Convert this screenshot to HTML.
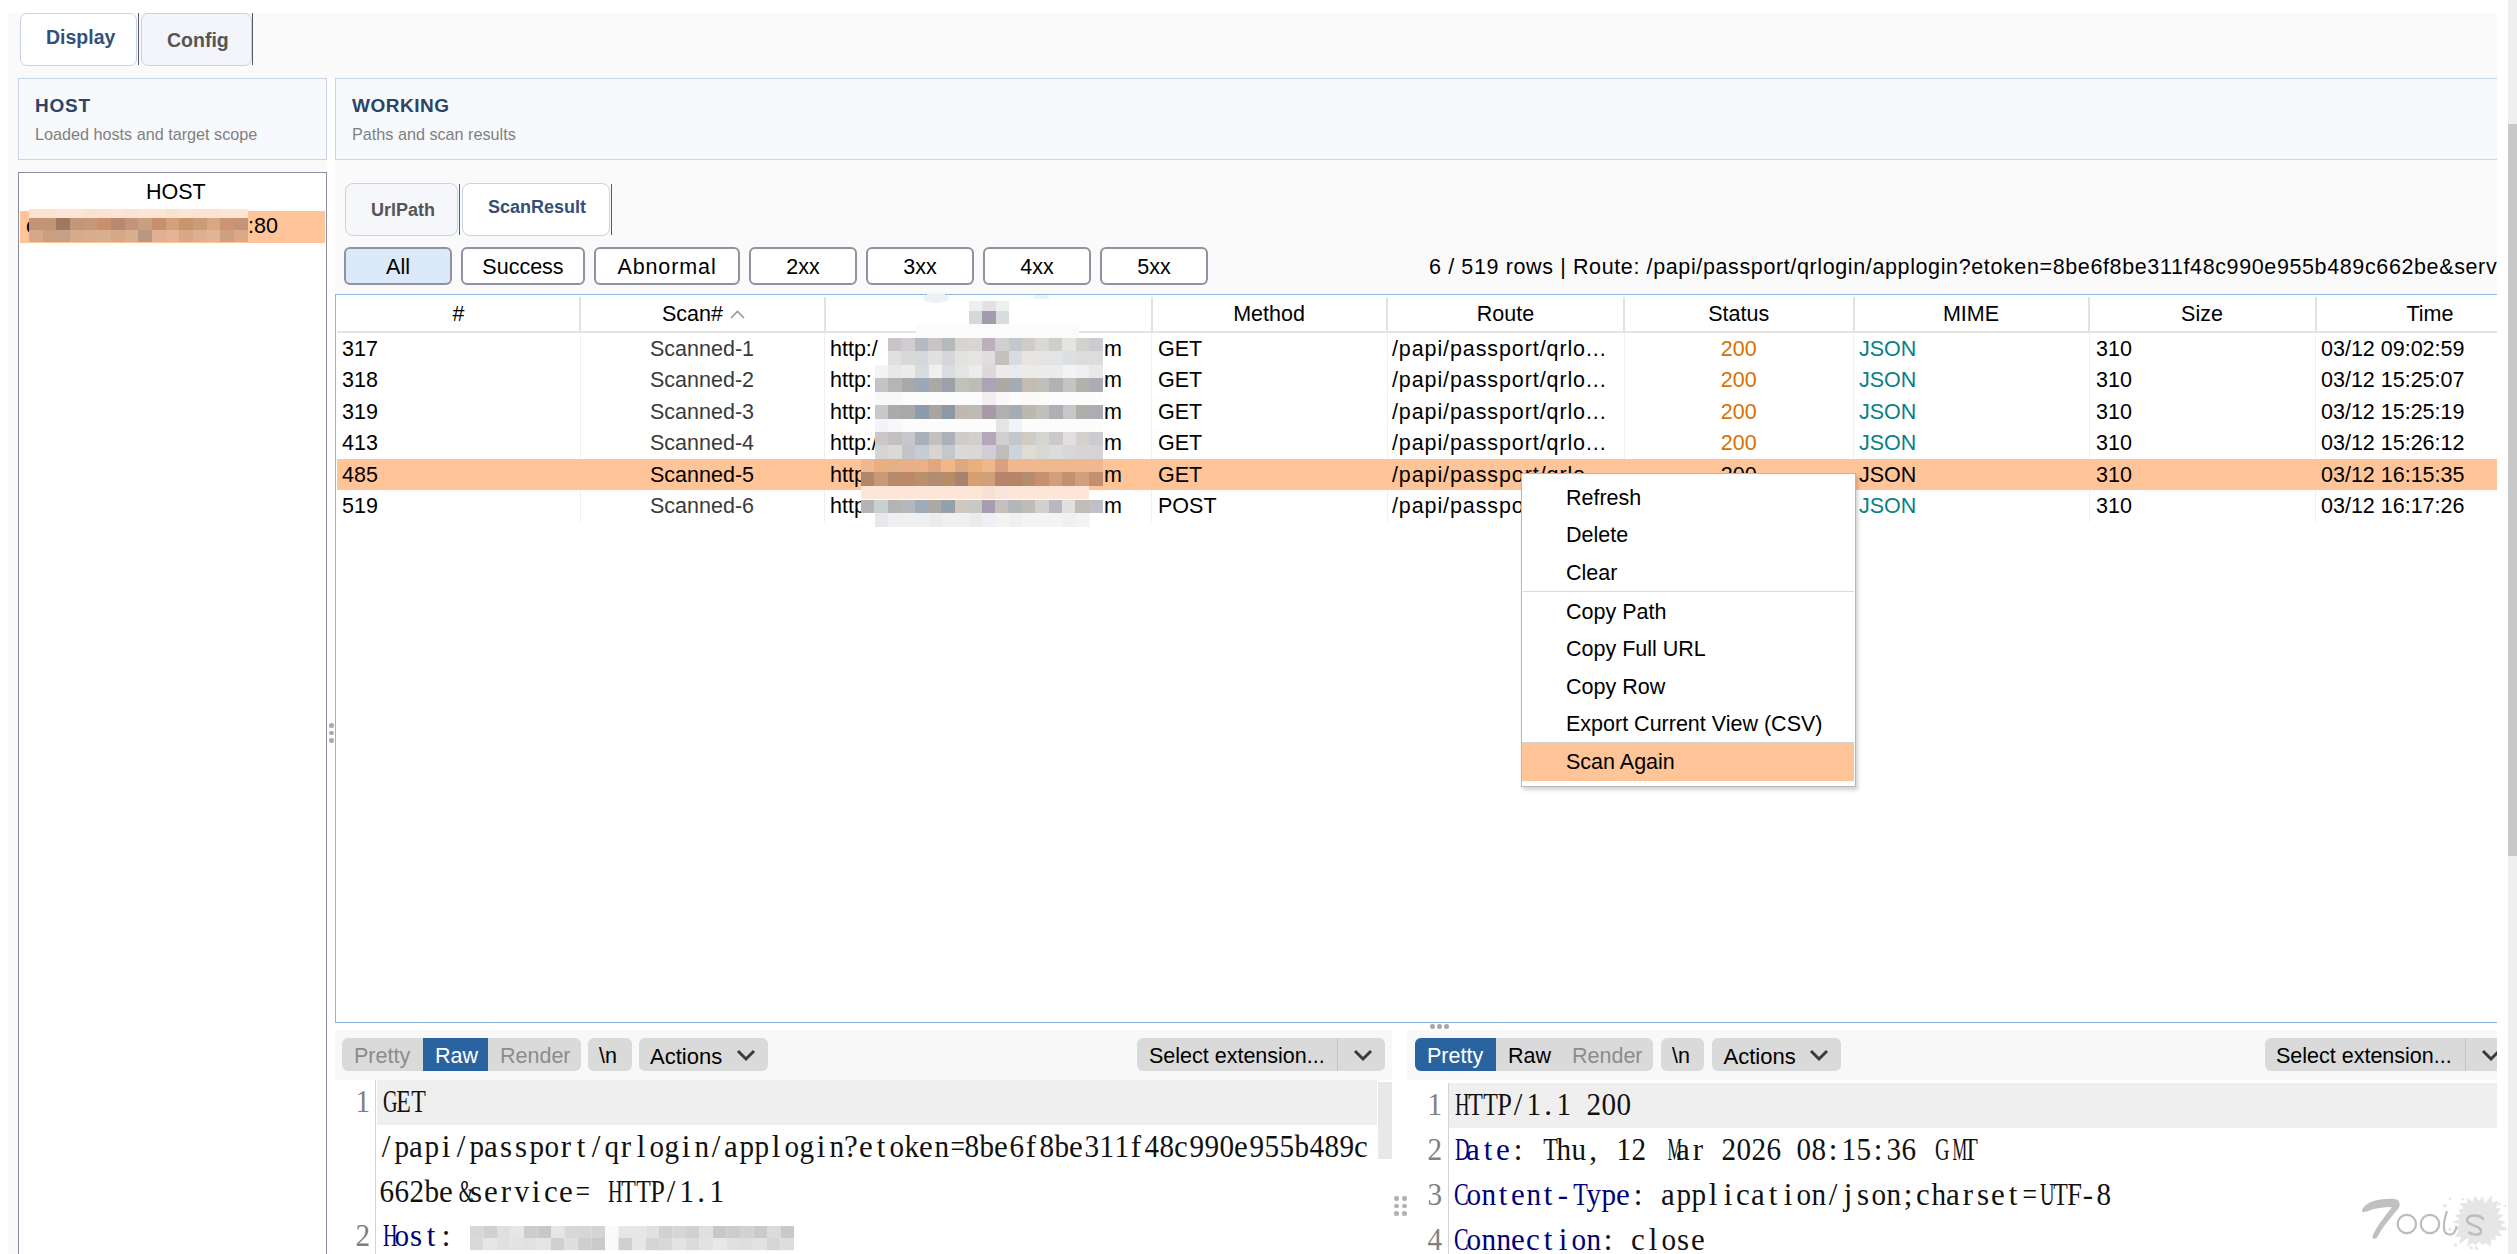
<!DOCTYPE html>
<html><head><meta charset="utf-8">
<style>
*{box-sizing:border-box;margin:0;padding:0}
html,body{width:2517px;height:1254px;overflow:hidden;background:#fff}
body{position:relative;font-family:"Liberation Sans",sans-serif;color:#000}
.a{position:absolute}
.t{position:absolute;white-space:pre;line-height:1}
.bg{background:#fafafa}
.tab{position:absolute;border:1px solid #c6d3e6;border-radius:8px}
.vl{position:absolute;width:1.4px;background:#585b6a}
.ph{position:absolute;background:#f7f9fc;border:1.5px solid #c9d6e9}
.ph .h{position:absolute;left:16px;top:16.5px;font-size:19px;font-weight:bold;letter-spacing:0.8px;color:#2c4466;line-height:1}
.ph .s{position:absolute;left:16px;top:47px;font-size:16.2px;color:#808080;line-height:1}
.fb{position:absolute;top:247px;height:38px;border:2px solid #9291a0;border-radius:6px;background:#fff;font-size:21.5px;text-align:center;line-height:36px}
.hd{font-size:21.5px}
.sep{position:absolute;width:2px;background:#e2e2e2}
.rsep{position:absolute;width:1px;background:#f0f0f0}
.ser{font-family:"Liberation Serif",serif;font-size:31px;color:#111}
.ser i{display:inline-block;width:15px;text-align:center;font-style:normal}
.ser b{display:inline-block;font-weight:normal}
.tb{position:absolute;background:#dadada;border-radius:6px;font-size:21.5px;line-height:33px;height:33px;top:1038px}
</style></head><body>

<!-- top tab strip -->
<div class="a bg" style="left:8px;top:13px;width:2489px;height:65px"></div>
<div class="tab" style="left:20px;top:13px;width:117px;height:53px;background:#fff;border-radius:7px"></div>
<div class="tab" style="left:141px;top:13px;width:111px;height:53px;background:#f3f5fa;border-radius:7px"></div>
<div class="vl" style="left:138px;top:13px;height:52px"></div>
<div class="vl" style="left:252px;top:13px;height:52px"></div>
<div class="t" style="left:46px;top:28px;font-size:19.5px;font-weight:bold;color:#34507a">Display</div>
<div class="t" style="left:167px;top:31px;font-size:19.5px;font-weight:bold;color:#555">Config</div>

<!-- left gray strip -->
<div class="a bg" style="left:8px;top:78px;width:319px;height:1176px"></div>
<!-- right gray work area -->
<div class="a bg" style="left:335px;top:78px;width:2162px;height:216px"></div>

<!-- panel headers -->
<div class="ph" style="left:18px;top:78px;width:309px;height:82px"><div class="h">HOST</div><div class="s">Loaded hosts and target scope</div></div>
<div class="ph" style="left:335px;top:78px;width:2162px;height:82px;border-right:none"><div class="h" style="letter-spacing:0.5px">WORKING</div><div class="s">Paths and scan results</div></div>

<!-- host table -->
<div class="a" style="left:18px;top:172px;width:309px;height:1090px;background:#fff;border:1.5px solid #8e8ca0;border-bottom:none"></div>
<div class="t hd" style="left:146px;top:182px;font-size:21.5px">HOST</div>
<div class="a" style="left:20px;top:211px;width:305px;height:32px;background:#ffc497"></div>
<div class="t hd" style="left:248px;top:216px">:80</div>
<div class="t hd" style="left:26px;top:216px">c</div>

<!-- splitter dots -->
<div class="a" style="left:329px;top:723px;width:4.5px;height:4.5px;border-radius:50%;background:#aaa"></div>
<div class="a" style="left:329px;top:730.5px;width:4.5px;height:4.5px;border-radius:50%;background:#aaa"></div>
<div class="a" style="left:329px;top:738px;width:4.5px;height:4.5px;border-radius:50%;background:#aaa"></div>

<!-- UrlPath / ScanResult tabs -->
<div class="tab" style="left:345px;top:183px;width:113px;height:53px;background:#f5f7fb;border-width:1.5px"></div>
<div class="tab" style="left:462px;top:183px;width:148px;height:53px;background:#fff;border-width:1.5px"></div>
<div class="vl" style="left:459px;top:184px;height:51px;width:1.4px"></div>
<div class="vl" style="left:611px;top:184px;height:51px;width:1.4px"></div>
<div class="t" style="left:371px;top:201px;font-size:18px;font-weight:bold;color:#555">UrlPath</div>
<div class="t" style="left:488px;top:198px;font-size:18px;font-weight:bold;color:#34507a">ScanResult</div>

<!-- filter buttons -->
<div class="fb" style="left:344px;width:108px;background:#dbe9f8">All</div>
<div class="fb" style="left:461px;width:124px">Success</div>
<div class="fb" style="left:594px;width:146px;letter-spacing:0.9px">Abnormal</div>
<div class="fb" style="left:749px;width:108px">2xx</div>
<div class="fb" style="left:866px;width:108px">3xx</div>
<div class="fb" style="left:983px;width:108px">4xx</div>
<div class="fb" style="left:1100px;width:108px">5xx</div>
<div class="a" style="left:1420px;top:250px;width:1077px;height:36px;overflow:hidden"><div class="t" style="left:9px;top:6.5px;font-size:21.5px;letter-spacing:0.62px">6 / 519 rows | Route: /papi/passport/qrlogin/applogin?etoken=8be6f8be311f48c990e955b489c662be&amp;service=</div></div>

<!-- TABLE -->
<div class="a" style="left:335px;top:294px;width:2162px;height:729px;background:#fff;border:1.5px solid #8db4e2;border-right:none"></div>
<div class="sep" style="left:579.3px;top:297px;height:35px"></div>
<div class="rsep" style="left:579.8px;top:333px;height:189px"></div>
<div class="sep" style="left:823.5px;top:297px;height:35px"></div>
<div class="rsep" style="left:824.0px;top:333px;height:189px"></div>
<div class="sep" style="left:1150.5px;top:297px;height:35px"></div>
<div class="rsep" style="left:1151.0px;top:333px;height:189px"></div>
<div class="sep" style="left:1386.0px;top:297px;height:35px"></div>
<div class="rsep" style="left:1386.5px;top:333px;height:189px"></div>
<div class="sep" style="left:1623.0px;top:297px;height:35px"></div>
<div class="rsep" style="left:1623.5px;top:333px;height:189px"></div>
<div class="sep" style="left:1852.5px;top:297px;height:35px"></div>
<div class="rsep" style="left:1853.0px;top:333px;height:189px"></div>
<div class="sep" style="left:2088.0px;top:297px;height:35px"></div>
<div class="rsep" style="left:2088.5px;top:333px;height:189px"></div>
<div class="sep" style="left:2314.5px;top:297px;height:35px"></div>
<div class="rsep" style="left:2315.0px;top:333px;height:189px"></div>
<div class="a" style="left:337px;top:331px;width:2160px;height:2px;background:#e4e4e4"></div>
<div class="t hd" style="left:258.5px;width:400px;text-align:center;top:304.3px">#</div>
<div class="t hd" style="left:1069px;width:400px;text-align:center;top:304.3px">Method</div>
<div class="t hd" style="left:1305.5px;width:400px;text-align:center;top:304.3px">Route</div>
<div class="t hd" style="left:1538.7px;width:400px;text-align:center;top:304.3px">Status</div>
<div class="t hd" style="left:1771px;width:400px;text-align:center;top:304.3px">MIME</div>
<div class="t hd" style="left:2002px;width:400px;text-align:center;top:304.3px">Size</div>
<div class="t hd" style="left:2230px;width:400px;text-align:center;top:304.3px">Time</div>
<div class="t hd" style="left:662px;top:304.3px">Scan#</div>
<svg class="a" style="left:729px;top:308px" width="17" height="12"><path d="M2 10 L8.5 3.5 L15 10" fill="none" stroke="#9a9a9a" stroke-width="1.6"/></svg>
<div class="a" style="left:337px;top:459px;width:2160px;height:31px;background:#ffc497"></div>
<div class="t hd" style="left:342px;top:338.5px">317</div>
<div class="t hd" style="left:502px;width:400px;text-align:center;top:338.5px;color:#3a3a3a">Scanned-1</div>
<div class="t hd" style="left:830px;top:338.5px">http:/</div>
<div class="t hd" style="left:1104px;top:338.5px">m</div>
<div class="t hd" style="left:1158px;top:338.5px">GET</div>
<div class="t hd" style="left:1392px;top:338.5px;letter-spacing:0.9px">/papi/passport/qrlo...</div>
<div class="t hd" style="left:1538.7px;width:400px;text-align:center;top:338.5px;color:#d97000">200</div>
<div class="t hd" style="left:1859px;top:338.5px;color:#0a7f86">JSON</div>
<div class="t hd" style="left:2096px;top:338.5px">310</div>
<div class="t hd" style="left:2321px;top:338.5px">03/12 09:02:59</div>
<div class="t hd" style="left:342px;top:370.0px">318</div>
<div class="t hd" style="left:502px;width:400px;text-align:center;top:370.0px;color:#3a3a3a">Scanned-2</div>
<div class="t hd" style="left:830px;top:370.0px">http:</div>
<div class="t hd" style="left:1104px;top:370.0px">m</div>
<div class="t hd" style="left:1158px;top:370.0px">GET</div>
<div class="t hd" style="left:1392px;top:370.0px;letter-spacing:0.9px">/papi/passport/qrlo...</div>
<div class="t hd" style="left:1538.7px;width:400px;text-align:center;top:370.0px;color:#d97000">200</div>
<div class="t hd" style="left:1859px;top:370.0px;color:#0a7f86">JSON</div>
<div class="t hd" style="left:2096px;top:370.0px">310</div>
<div class="t hd" style="left:2321px;top:370.0px">03/12 15:25:07</div>
<div class="t hd" style="left:342px;top:401.5px">319</div>
<div class="t hd" style="left:502px;width:400px;text-align:center;top:401.5px;color:#3a3a3a">Scanned-3</div>
<div class="t hd" style="left:830px;top:401.5px">http:</div>
<div class="t hd" style="left:1104px;top:401.5px">m</div>
<div class="t hd" style="left:1158px;top:401.5px">GET</div>
<div class="t hd" style="left:1392px;top:401.5px;letter-spacing:0.9px">/papi/passport/qrlo...</div>
<div class="t hd" style="left:1538.7px;width:400px;text-align:center;top:401.5px;color:#d97000">200</div>
<div class="t hd" style="left:1859px;top:401.5px;color:#0a7f86">JSON</div>
<div class="t hd" style="left:2096px;top:401.5px">310</div>
<div class="t hd" style="left:2321px;top:401.5px">03/12 15:25:19</div>
<div class="t hd" style="left:342px;top:433.0px">413</div>
<div class="t hd" style="left:502px;width:400px;text-align:center;top:433.0px;color:#3a3a3a">Scanned-4</div>
<div class="t hd" style="left:830px;top:433.0px">http:/</div>
<div class="t hd" style="left:1104px;top:433.0px">m</div>
<div class="t hd" style="left:1158px;top:433.0px">GET</div>
<div class="t hd" style="left:1392px;top:433.0px;letter-spacing:0.9px">/papi/passport/qrlo...</div>
<div class="t hd" style="left:1538.7px;width:400px;text-align:center;top:433.0px;color:#d97000">200</div>
<div class="t hd" style="left:1859px;top:433.0px;color:#0a7f86">JSON</div>
<div class="t hd" style="left:2096px;top:433.0px">310</div>
<div class="t hd" style="left:2321px;top:433.0px">03/12 15:26:12</div>
<div class="t hd" style="left:342px;top:464.5px">485</div>
<div class="t hd" style="left:502px;width:400px;text-align:center;top:464.5px;color:#000">Scanned-5</div>
<div class="t hd" style="left:830px;top:464.5px">http</div>
<div class="t hd" style="left:1104px;top:464.5px">m</div>
<div class="t hd" style="left:1158px;top:464.5px">GET</div>
<div class="t hd" style="left:1392px;top:464.5px;letter-spacing:0.9px">/papi/passport/qrlo...</div>
<div class="t hd" style="left:1538.7px;width:400px;text-align:center;top:464.5px;color:#000">200</div>
<div class="t hd" style="left:1859px;top:464.5px;color:#000">JSON</div>
<div class="t hd" style="left:2096px;top:464.5px">310</div>
<div class="t hd" style="left:2321px;top:464.5px">03/12 16:15:35</div>
<div class="t hd" style="left:342px;top:496.0px">519</div>
<div class="t hd" style="left:502px;width:400px;text-align:center;top:496.0px;color:#3a3a3a">Scanned-6</div>
<div class="t hd" style="left:830px;top:496.0px">http</div>
<div class="t hd" style="left:1104px;top:496.0px">m</div>
<div class="t hd" style="left:1158px;top:496.0px">POST</div>
<div class="t hd" style="left:1392px;top:496.0px;letter-spacing:0.9px">/papi/passport/qrlo...</div>
<div class="t hd" style="left:1538.7px;width:400px;text-align:center;top:496.0px;color:#d97000">200</div>
<div class="t hd" style="left:1859px;top:496.0px;color:#0a7f86">JSON</div>
<div class="t hd" style="left:2096px;top:496.0px">310</div>
<div class="t hd" style="left:2321px;top:496.0px">03/12 16:17:26</div>
<svg class="a" style="left:855px;top:288px" width="260" height="250" shape-rendering="crispEdges"><rect x="60.5" y="35.5" width="163" height="15" fill="#fbfbfb"/><ellipse cx="81" cy="10" rx="13" ry="5" fill="#eef1f6"/><ellipse cx="186" cy="9" rx="8" ry="2.5" fill="#eef1f6"/><rect x="114.0" y="12.5" width="13.6" height="12.6" fill="#ecf0f0"/><rect x="127.4" y="12.5" width="13.6" height="12.6" fill="#e4e0e4"/><rect x="140.8" y="12.5" width="13.6" height="12.6" fill="#ecf0ee"/><rect x="114.0" y="23.0" width="13.6" height="12.6" fill="#d4d8d8"/><rect x="127.4" y="23.0" width="13.6" height="12.6" fill="#a09cac"/><rect x="140.8" y="23.0" width="13.6" height="12.6" fill="#d8dcdc"/><rect x="33.0" y="49.9" width="13.8" height="13.8" fill="#c8c4c8"/><rect x="46.4" y="49.9" width="13.8" height="13.8" fill="#cfcdd0"/><rect x="59.8" y="49.9" width="13.8" height="13.8" fill="#b4bac4"/><rect x="73.2" y="49.9" width="13.8" height="13.8" fill="#c8c4c4"/><rect x="86.6" y="49.9" width="13.8" height="13.8" fill="#b4b9bc"/><rect x="100.0" y="49.9" width="13.8" height="13.8" fill="#d8d4d0"/><rect x="113.4" y="49.9" width="13.8" height="13.8" fill="#d8d6d4"/><rect x="126.8" y="49.9" width="13.8" height="13.8" fill="#bcb0bc"/><rect x="140.2" y="49.9" width="13.8" height="13.8" fill="#d0d0d0"/><rect x="153.6" y="49.9" width="13.8" height="13.8" fill="#c4c8cc"/><rect x="167.0" y="49.9" width="13.8" height="13.8" fill="#d0ccc8"/><rect x="180.4" y="49.9" width="13.8" height="13.8" fill="#d8d8d6"/><rect x="193.8" y="49.9" width="13.8" height="13.8" fill="#d0cecc"/><rect x="207.2" y="49.9" width="13.8" height="13.8" fill="#e4e4e2"/><rect x="220.6" y="49.9" width="13.8" height="13.8" fill="#d4d2d0"/><rect x="234.0" y="49.9" width="13.8" height="13.8" fill="#cccbd0"/><rect x="33.0" y="63.3" width="13.8" height="13.8" fill="#e0e0e0"/><rect x="46.4" y="63.3" width="13.8" height="13.8" fill="#d8d8d8"/><rect x="59.8" y="63.3" width="13.8" height="13.8" fill="#d4d8dc"/><rect x="73.2" y="63.3" width="13.8" height="13.8" fill="#e0e0de"/><rect x="86.6" y="63.3" width="13.8" height="13.8" fill="#d4d6da"/><rect x="100.0" y="63.3" width="13.8" height="13.8" fill="#e4e2e0"/><rect x="113.4" y="63.3" width="13.8" height="13.8" fill="#e4e4e2"/><rect x="126.8" y="63.3" width="13.8" height="13.8" fill="#e0dce0"/><rect x="140.2" y="63.3" width="13.8" height="13.8" fill="#c4c0bc"/><rect x="153.6" y="63.3" width="13.8" height="13.8" fill="#d8dce0"/><rect x="167.0" y="63.3" width="13.8" height="13.8" fill="#e8e4e0"/><rect x="180.4" y="63.3" width="13.8" height="13.8" fill="#e4e4e2"/><rect x="193.8" y="63.3" width="13.8" height="13.8" fill="#e4e4e4"/><rect x="207.2" y="63.3" width="13.8" height="13.8" fill="#dce0e2"/><rect x="220.6" y="63.3" width="13.8" height="13.8" fill="#dcdcdc"/><rect x="234.0" y="63.3" width="13.8" height="13.8" fill="#dcdcde"/><rect x="20.0" y="76.7" width="13.8" height="13.8" fill="#f4f4f4"/><rect x="33.4" y="76.7" width="13.8" height="13.8" fill="#e8e8e8"/><rect x="46.8" y="76.7" width="13.8" height="13.8" fill="#ececea"/><rect x="60.2" y="76.7" width="13.8" height="13.8" fill="#d8dcdf"/><rect x="73.6" y="76.7" width="13.8" height="13.8" fill="#f0f0f0"/><rect x="87.0" y="76.7" width="13.8" height="13.8" fill="#dadcdf"/><rect x="100.4" y="76.7" width="13.8" height="13.8" fill="#e4e4e4"/><rect x="113.8" y="76.7" width="13.8" height="13.8" fill="#ececec"/><rect x="127.2" y="76.7" width="13.8" height="13.8" fill="#dcd8dc"/><rect x="140.6" y="76.7" width="13.8" height="13.8" fill="#ececee"/><rect x="154.0" y="76.7" width="13.8" height="13.8" fill="#e8ecee"/><rect x="167.4" y="76.7" width="13.8" height="13.8" fill="#eeeae8"/><rect x="180.8" y="76.7" width="13.8" height="13.8" fill="#ececec"/><rect x="194.2" y="76.7" width="13.8" height="13.8" fill="#ececec"/><rect x="207.6" y="76.7" width="13.8" height="13.8" fill="#f4f4f4"/><rect x="221.0" y="76.7" width="13.8" height="13.8" fill="#f0f0f0"/><rect x="234.4" y="76.7" width="13.8" height="13.8" fill="#e8e8e8"/><rect x="20.0" y="90.1" width="13.8" height="13.8" fill="#c4c4c8"/><rect x="33.4" y="90.1" width="13.8" height="13.8" fill="#b8b4b4"/><rect x="46.8" y="90.1" width="13.8" height="13.8" fill="#a8a8ac"/><rect x="60.2" y="90.1" width="13.8" height="13.8" fill="#9ca8b8"/><rect x="73.6" y="90.1" width="13.8" height="13.8" fill="#aca8a4"/><rect x="87.0" y="90.1" width="13.8" height="13.8" fill="#9ca0a8"/><rect x="100.4" y="90.1" width="13.8" height="13.8" fill="#c4c0bc"/><rect x="113.8" y="90.1" width="13.8" height="13.8" fill="#bcbcb8"/><rect x="127.2" y="90.1" width="13.8" height="13.8" fill="#aca4b4"/><rect x="140.6" y="90.1" width="13.8" height="13.8" fill="#aca8a4"/><rect x="154.0" y="90.1" width="13.8" height="13.8" fill="#a4acb4"/><rect x="167.4" y="90.1" width="13.8" height="13.8" fill="#c4bcb4"/><rect x="180.8" y="90.1" width="13.8" height="13.8" fill="#c0c0b8"/><rect x="194.2" y="90.1" width="13.8" height="13.8" fill="#b4b0b4"/><rect x="207.6" y="90.1" width="13.8" height="13.8" fill="#c4c4c4"/><rect x="221.0" y="90.1" width="13.8" height="13.8" fill="#b4b0ac"/><rect x="234.4" y="90.1" width="13.8" height="13.8" fill="#acacb4"/><rect x="20.0" y="103.5" width="13.8" height="13.8" fill="#f8f8fa"/><rect x="33.4" y="103.5" width="13.8" height="13.8" fill="#f6f8fa"/><rect x="46.8" y="103.5" width="13.8" height="13.8" fill="#fcfcfc"/><rect x="60.2" y="103.5" width="13.8" height="13.8" fill="#fcfcfc"/><rect x="73.6" y="103.5" width="13.8" height="13.8" fill="#fcfcfc"/><rect x="87.0" y="103.5" width="13.8" height="13.8" fill="#fcfcfc"/><rect x="100.4" y="103.5" width="13.8" height="13.8" fill="#fcfcfc"/><rect x="113.8" y="103.5" width="13.8" height="13.8" fill="#fcfcfc"/><rect x="127.2" y="103.5" width="13.8" height="13.8" fill="#f0eef0"/><rect x="140.6" y="103.5" width="13.8" height="13.8" fill="#f8f8f8"/><rect x="154.0" y="103.5" width="13.8" height="13.8" fill="#fcfcfc"/><rect x="167.4" y="103.5" width="13.8" height="13.8" fill="#fbfaf8"/><rect x="180.8" y="103.5" width="13.8" height="13.8" fill="#fafcfa"/><rect x="194.2" y="103.5" width="13.8" height="13.8" fill="#fcfcfc"/><rect x="207.6" y="103.5" width="13.8" height="13.8" fill="#fcfcfc"/><rect x="221.0" y="103.5" width="13.8" height="13.8" fill="#fcfcfc"/><rect x="234.4" y="103.5" width="13.8" height="13.8" fill="#fcfcfc"/><rect x="20.0" y="116.9" width="13.8" height="13.8" fill="#c8c8cc"/><rect x="33.4" y="116.9" width="13.8" height="13.8" fill="#acaaa8"/><rect x="46.8" y="116.9" width="13.8" height="13.8" fill="#a8a8a8"/><rect x="60.2" y="116.9" width="13.8" height="13.8" fill="#8c9cac"/><rect x="73.6" y="116.9" width="13.8" height="13.8" fill="#a8a4a0"/><rect x="87.0" y="116.9" width="13.8" height="13.8" fill="#8c98a4"/><rect x="100.4" y="116.9" width="13.8" height="13.8" fill="#c0b8b0"/><rect x="113.8" y="116.9" width="13.8" height="13.8" fill="#bcbab4"/><rect x="127.2" y="116.9" width="13.8" height="13.8" fill="#a898a8"/><rect x="140.6" y="116.9" width="13.8" height="13.8" fill="#b0b0b0"/><rect x="154.0" y="116.9" width="13.8" height="13.8" fill="#a4acb4"/><rect x="167.4" y="116.9" width="13.8" height="13.8" fill="#bcb8b0"/><rect x="180.8" y="116.9" width="13.8" height="13.8" fill="#c0c0bc"/><rect x="194.2" y="116.9" width="13.8" height="13.8" fill="#b0b0b4"/><rect x="207.6" y="116.9" width="13.8" height="13.8" fill="#c4c8c8"/><rect x="221.0" y="116.9" width="13.8" height="13.8" fill="#b0aca8"/><rect x="234.4" y="116.9" width="13.8" height="13.8" fill="#acacb4"/><rect x="20.0" y="130.6" width="13.8" height="13.8" fill="#f4f4f6"/><rect x="33.4" y="130.6" width="13.8" height="13.8" fill="#f8f8fa"/><rect x="46.8" y="130.6" width="13.8" height="13.8" fill="#fcfcfc"/><rect x="60.2" y="130.6" width="13.8" height="13.8" fill="#fcfcfc"/><rect x="73.6" y="130.6" width="13.8" height="13.8" fill="#fcfcfc"/><rect x="87.0" y="130.6" width="13.8" height="13.8" fill="#fcfcfc"/><rect x="100.4" y="130.6" width="13.8" height="13.8" fill="#fcfcfc"/><rect x="113.8" y="130.6" width="13.8" height="13.8" fill="#fcfcfc"/><rect x="127.2" y="130.6" width="13.8" height="13.8" fill="#fcfcfc"/><rect x="140.6" y="130.6" width="13.8" height="13.8" fill="#e4e4e2"/><rect x="154.0" y="130.6" width="13.8" height="13.8" fill="#f0f4f8"/><rect x="167.4" y="130.6" width="13.8" height="13.8" fill="#fcfcfc"/><rect x="180.8" y="130.6" width="13.8" height="13.8" fill="#fcfcfc"/><rect x="194.2" y="130.6" width="13.8" height="13.8" fill="#fcfcfc"/><rect x="207.6" y="130.6" width="13.8" height="13.8" fill="#fcfcfc"/><rect x="221.0" y="130.6" width="13.8" height="13.8" fill="#fcfcfc"/><rect x="234.4" y="130.6" width="13.8" height="13.8" fill="#fcfcfc"/><rect x="20.0" y="144.0" width="13.8" height="13.8" fill="#c8c8c8"/><rect x="33.4" y="144.0" width="13.8" height="13.8" fill="#c4c0c0"/><rect x="46.8" y="144.0" width="13.8" height="13.8" fill="#c8c8cc"/><rect x="60.2" y="144.0" width="13.8" height="13.8" fill="#a8b0bc"/><rect x="73.6" y="144.0" width="13.8" height="13.8" fill="#c4c0bc"/><rect x="87.0" y="144.0" width="13.8" height="13.8" fill="#acb0b8"/><rect x="100.4" y="144.0" width="13.8" height="13.8" fill="#d0ccc8"/><rect x="113.8" y="144.0" width="13.8" height="13.8" fill="#d0d0cc"/><rect x="127.2" y="144.0" width="13.8" height="13.8" fill="#b4a8b8"/><rect x="140.6" y="144.0" width="13.8" height="13.8" fill="#d0d0d0"/><rect x="154.0" y="144.0" width="13.8" height="13.8" fill="#c4c8cc"/><rect x="167.4" y="144.0" width="13.8" height="13.8" fill="#d0ccc4"/><rect x="180.8" y="144.0" width="13.8" height="13.8" fill="#d4d4d0"/><rect x="194.2" y="144.0" width="13.8" height="13.8" fill="#ccc8cc"/><rect x="207.6" y="144.0" width="13.8" height="13.8" fill="#e0e0e0"/><rect x="221.0" y="144.0" width="13.8" height="13.8" fill="#d4d0cc"/><rect x="234.4" y="144.0" width="13.8" height="13.8" fill="#ccccd0"/><rect x="20.0" y="157.4" width="13.8" height="13.8" fill="#d4d4d4"/><rect x="33.4" y="157.4" width="13.8" height="13.8" fill="#dcdad8"/><rect x="46.8" y="157.4" width="13.8" height="13.8" fill="#c4c4c8"/><rect x="60.2" y="157.4" width="13.8" height="13.8" fill="#c4ccd4"/><rect x="73.6" y="157.4" width="13.8" height="13.8" fill="#d8d4d0"/><rect x="87.0" y="157.4" width="13.8" height="13.8" fill="#c4c8cc"/><rect x="100.4" y="157.4" width="13.8" height="13.8" fill="#dcdad8"/><rect x="113.8" y="157.4" width="13.8" height="13.8" fill="#d8d8d4"/><rect x="127.2" y="157.4" width="13.8" height="13.8" fill="#d0ccd8"/><rect x="140.6" y="157.4" width="13.8" height="13.8" fill="#c0bcb8"/><rect x="154.0" y="157.4" width="13.8" height="13.8" fill="#ccd4dc"/><rect x="167.4" y="157.4" width="13.8" height="13.8" fill="#e0dcd4"/><rect x="180.8" y="157.4" width="13.8" height="13.8" fill="#d8d8d4"/><rect x="194.2" y="157.4" width="13.8" height="13.8" fill="#dcdcdc"/><rect x="207.6" y="157.4" width="13.8" height="13.8" fill="#d8d8dc"/><rect x="221.0" y="157.4" width="13.8" height="13.8" fill="#d8d4d4"/><rect x="234.4" y="157.4" width="13.8" height="13.8" fill="#d4d4d4"/><rect x="6.0" y="170.8" width="13.8" height="13.8" fill="#f0b890"/><rect x="19.4" y="170.8" width="13.8" height="13.8" fill="#e8b080"/><rect x="32.8" y="170.8" width="13.8" height="13.8" fill="#e4b088"/><rect x="46.2" y="170.8" width="13.8" height="13.8" fill="#e8b088"/><rect x="59.6" y="170.8" width="13.8" height="13.8" fill="#ecb088"/><rect x="73.0" y="170.8" width="13.8" height="13.8" fill="#e0a880"/><rect x="86.4" y="170.8" width="13.8" height="13.8" fill="#f0b888"/><rect x="99.8" y="170.8" width="13.8" height="13.8" fill="#e0a880"/><rect x="113.2" y="170.8" width="13.8" height="13.8" fill="#e8b080"/><rect x="126.6" y="170.8" width="13.8" height="13.8" fill="#f0b888"/><rect x="140.0" y="170.8" width="13.8" height="13.8" fill="#dca080"/><rect x="153.4" y="170.8" width="13.8" height="13.8" fill="#f0b88c"/><rect x="166.8" y="170.8" width="13.8" height="13.8" fill="#f0b890"/><rect x="180.2" y="170.8" width="13.8" height="13.8" fill="#f0b890"/><rect x="193.6" y="170.8" width="13.8" height="13.8" fill="#f0b890"/><rect x="207.0" y="170.8" width="13.8" height="13.8" fill="#f0b890"/><rect x="220.4" y="170.8" width="13.8" height="13.8" fill="#f0b890"/><rect x="233.8" y="170.8" width="13.8" height="13.8" fill="#f0b890"/><rect x="6.0" y="184.2" width="13.8" height="13.8" fill="#b08868"/><rect x="19.4" y="184.2" width="13.8" height="13.8" fill="#c89878"/><rect x="32.8" y="184.2" width="13.8" height="13.8" fill="#b88a6c"/><rect x="46.2" y="184.2" width="13.8" height="13.8" fill="#bc8868"/><rect x="59.6" y="184.2" width="13.8" height="13.8" fill="#b8906c"/><rect x="73.0" y="184.2" width="13.8" height="13.8" fill="#b08c70"/><rect x="86.4" y="184.2" width="13.8" height="13.8" fill="#b88c68"/><rect x="99.8" y="184.2" width="13.8" height="13.8" fill="#a88470"/><rect x="113.2" y="184.2" width="13.8" height="13.8" fill="#d8a070"/><rect x="126.6" y="184.2" width="13.8" height="13.8" fill="#d0a078"/><rect x="140.0" y="184.2" width="13.8" height="13.8" fill="#b8846c"/><rect x="153.4" y="184.2" width="13.8" height="13.8" fill="#b88468"/><rect x="166.8" y="184.2" width="13.8" height="13.8" fill="#b48c70"/><rect x="180.2" y="184.2" width="13.8" height="13.8" fill="#c8906c"/><rect x="193.6" y="184.2" width="13.8" height="13.8" fill="#d0a07c"/><rect x="207.0" y="184.2" width="13.8" height="13.8" fill="#c49070"/><rect x="220.4" y="184.2" width="13.8" height="13.8" fill="#d0a07c"/><rect x="233.8" y="184.2" width="13.8" height="13.8" fill="#c09070"/><rect x="6.0" y="197.6" width="13.8" height="13.8" fill="#fde6d8"/><rect x="19.4" y="197.6" width="13.8" height="13.8" fill="#fde6d8"/><rect x="32.8" y="197.6" width="13.8" height="13.8" fill="#fde6d8"/><rect x="46.2" y="197.6" width="13.8" height="13.8" fill="#fde6d8"/><rect x="59.6" y="197.6" width="13.8" height="13.8" fill="#fde6d8"/><rect x="73.0" y="197.6" width="13.8" height="13.8" fill="#fde6d8"/><rect x="86.4" y="197.6" width="13.8" height="13.8" fill="#fde6d8"/><rect x="99.8" y="197.6" width="13.8" height="13.8" fill="#fde6d8"/><rect x="113.2" y="197.6" width="13.8" height="13.8" fill="#fde6d8"/><rect x="126.6" y="197.6" width="13.8" height="13.8" fill="#f8e0d4"/><rect x="140.0" y="197.6" width="13.8" height="13.8" fill="#f8e6dc"/><rect x="153.4" y="197.6" width="13.8" height="13.8" fill="#fde6d8"/><rect x="166.8" y="197.6" width="13.8" height="13.8" fill="#fde6d8"/><rect x="180.2" y="197.6" width="13.8" height="13.8" fill="#fde6d8"/><rect x="193.6" y="197.6" width="13.8" height="13.8" fill="#fde6d8"/><rect x="207.0" y="197.6" width="13.8" height="13.8" fill="#fde6d8"/><rect x="220.4" y="197.6" width="13.8" height="13.8" fill="#fde6d8"/><rect x="6.0" y="211.6" width="13.8" height="13.8" fill="#b4b4b4"/><rect x="19.4" y="211.6" width="13.8" height="13.8" fill="#c8d0d0"/><rect x="32.8" y="211.6" width="13.8" height="13.8" fill="#b4b4b4"/><rect x="46.2" y="211.6" width="13.8" height="13.8" fill="#b4b8bc"/><rect x="59.6" y="211.6" width="13.8" height="13.8" fill="#9cacb8"/><rect x="73.0" y="211.6" width="13.8" height="13.8" fill="#aca8a4"/><rect x="86.4" y="211.6" width="13.8" height="13.8" fill="#94a0ac"/><rect x="99.8" y="211.6" width="13.8" height="13.8" fill="#d0c8c0"/><rect x="113.2" y="211.6" width="13.8" height="13.8" fill="#c8c8c4"/><rect x="126.6" y="211.6" width="13.8" height="13.8" fill="#a89cb0"/><rect x="140.0" y="211.6" width="13.8" height="13.8" fill="#c4c0bc"/><rect x="153.4" y="211.6" width="13.8" height="13.8" fill="#b0b8bc"/><rect x="166.8" y="211.6" width="13.8" height="13.8" fill="#c0bcb4"/><rect x="180.2" y="211.6" width="13.8" height="13.8" fill="#d0d0cc"/><rect x="193.6" y="211.6" width="13.8" height="13.8" fill="#b8b8c0"/><rect x="207.0" y="211.6" width="13.8" height="13.8" fill="#e0e0e0"/><rect x="220.4" y="211.6" width="13.8" height="13.8" fill="#c0bcb8"/><rect x="233.8" y="211.6" width="13.8" height="13.8" fill="#c0c0c8"/><rect x="20.0" y="225.0" width="13.8" height="13.8" fill="#e8e8ec"/><rect x="33.4" y="225.0" width="13.8" height="13.8" fill="#f0f0f0"/><rect x="46.8" y="225.0" width="13.8" height="13.8" fill="#f0f0f0"/><rect x="60.2" y="225.0" width="13.8" height="13.8" fill="#f0f0f0"/><rect x="73.6" y="225.0" width="13.8" height="13.8" fill="#ececec"/><rect x="87.0" y="225.0" width="13.8" height="13.8" fill="#f0f0f0"/><rect x="100.4" y="225.0" width="13.8" height="13.8" fill="#f0f0f0"/><rect x="113.8" y="225.0" width="13.8" height="13.8" fill="#ececec"/><rect x="127.2" y="225.0" width="13.8" height="13.8" fill="#f0f0f4"/><rect x="140.6" y="225.0" width="13.8" height="13.8" fill="#f4f4f4"/><rect x="154.0" y="225.0" width="13.8" height="13.8" fill="#f0f0f0"/><rect x="167.4" y="225.0" width="13.8" height="13.8" fill="#f4f4f4"/><rect x="180.8" y="225.0" width="13.8" height="13.8" fill="#f4f4f4"/><rect x="194.2" y="225.0" width="13.8" height="13.8" fill="#f4f4f4"/><rect x="207.6" y="225.0" width="13.8" height="13.8" fill="#f0f0f0"/><rect x="221.0" y="225.0" width="13.8" height="13.8" fill="#f4f4f4"/></svg>
<svg class="a" style="left:29px;top:209px" width="220" height="34" shape-rendering="crispEdges"><rect x="0.0" y="0" width="14" height="9" fill="#fde2d0"/><rect x="13.7" y="0" width="14" height="9" fill="#fde2d0"/><rect x="27.3" y="0" width="14" height="9" fill="#fde4d4"/><rect x="41.0" y="0" width="14" height="9" fill="#fde4d4"/><rect x="54.6" y="0" width="14" height="9" fill="#fce0d0"/><rect x="68.2" y="0" width="14" height="9" fill="#fce2d2"/><rect x="81.9" y="0" width="14" height="9" fill="#fde4d4"/><rect x="95.5" y="0" width="14" height="9" fill="#fce2d2"/><rect x="109.2" y="0" width="14" height="9" fill="#fde4d4"/><rect x="122.9" y="0" width="14" height="9" fill="#fde4d4"/><rect x="136.5" y="0" width="14" height="9" fill="#fce0d0"/><rect x="150.2" y="0" width="14" height="9" fill="#fde4d4"/><rect x="163.8" y="0" width="14" height="9" fill="#fde2d2"/><rect x="177.5" y="0" width="14" height="9" fill="#fde2d2"/><rect x="191.1" y="0" width="14" height="9" fill="#fde4d4"/><rect x="204.8" y="0" width="14" height="9" fill="#fde4d4"/><rect x="0.0" y="9" width="14" height="12" fill="#c49274"/><rect x="13.7" y="9" width="14" height="12" fill="#c29478"/><rect x="27.3" y="9" width="14" height="12" fill="#a07860"/><rect x="41.0" y="9" width="14" height="12" fill="#c09878"/><rect x="54.6" y="9" width="14" height="12" fill="#c49878"/><rect x="68.2" y="9" width="14" height="12" fill="#c8906c"/><rect x="81.9" y="9" width="14" height="12" fill="#b88870"/><rect x="95.5" y="9" width="14" height="12" fill="#c49478"/><rect x="109.2" y="9" width="14" height="12" fill="#c8a080"/><rect x="122.9" y="9" width="14" height="12" fill="#c49070"/><rect x="136.5" y="9" width="14" height="12" fill="#d4a078"/><rect x="150.2" y="9" width="14" height="12" fill="#c8946c"/><rect x="163.8" y="9" width="14" height="12" fill="#cc9c78"/><rect x="177.5" y="9" width="14" height="12" fill="#d8a880"/><rect x="191.1" y="9" width="14" height="12" fill="#cc9474"/><rect x="204.8" y="9" width="14" height="12" fill="#c49478"/><rect x="0.0" y="21" width="14" height="12" fill="#d4a888"/><rect x="13.7" y="21" width="14" height="12" fill="#c8a080"/><rect x="27.3" y="21" width="14" height="12" fill="#c4a084"/><rect x="41.0" y="21" width="14" height="12" fill="#d4ac8c"/><rect x="54.6" y="21" width="14" height="12" fill="#d8ac8c"/><rect x="68.2" y="21" width="14" height="12" fill="#d8b090"/><rect x="81.9" y="21" width="14" height="12" fill="#d4a888"/><rect x="95.5" y="21" width="14" height="12" fill="#d8b090"/><rect x="109.2" y="21" width="14" height="12" fill="#b89880"/><rect x="122.9" y="21" width="14" height="12" fill="#e0b090"/><rect x="136.5" y="21" width="14" height="12" fill="#e4b494"/><rect x="150.2" y="21" width="14" height="12" fill="#d8a888"/><rect x="163.8" y="21" width="14" height="12" fill="#dcb090"/><rect x="177.5" y="21" width="14" height="12" fill="#e0b494"/><rect x="191.1" y="21" width="14" height="12" fill="#cca080"/><rect x="204.8" y="21" width="14" height="12" fill="#dca888"/></svg>
<div class="a" style="left:1520.5px;top:473px;width:335px;height:314px;background:#fff;border:1.5px solid #b8b8b8;box-shadow:2px 3px 4px rgba(0,0,0,0.18)"></div>
<div class="a" style="left:1523px;top:590.5px;width:331px;height:1.5px;background:#dadada"></div>
<div class="a" style="left:1522px;top:743px;width:332px;height:38px;background:#ffc497"></div>
<div class="a" style="left:1522px;top:742px;width:332px;height:1.6px;background:#d2d2d2"></div>
<div class="t hd" style="left:1566px;top:488.0px">Refresh</div>
<div class="t hd" style="left:1566px;top:524.6px">Delete</div>
<div class="t hd" style="left:1566px;top:562.8px">Clear</div>
<div class="t hd" style="left:1566px;top:601.9px">Copy Path</div>
<div class="t hd" style="left:1566px;top:639.0px">Copy Full URL</div>
<div class="t hd" style="left:1566px;top:677.2px">Copy Row</div>
<div class="t hd" style="left:1566px;top:713.5px">Export Current View (CSV)</div>
<div class="t hd" style="left:1566px;top:752.0px">Scan Again</div><!-- /TABLE --><!-- EDITOR -->
<div class="a" style="left:335px;top:1030px;width:1057px;height:50px;background:#f8f8f8"></div>
<div class="a" style="left:1407px;top:1030px;width:1090px;height:50px;background:#f8f8f8"></div>
<div class="tb" style="left:342px;width:239px"></div>
<div class="a" style="left:423px;top:1038px;width:65px;height:33px;background:#2a64a0"></div>
<div class="t" style="left:354px;top:1046.3px;font-size:21.5px;color:#8c8c8c">Pretty</div>
<div class="t" style="left:435px;top:1046.3px;font-size:21.5px;color:#fff">Raw</div>
<div class="t" style="left:500px;top:1046.3px;font-size:21.5px;color:#8c8c8c">Render</div>
<div class="tb" style="left:588px;width:44px"></div>
<div class="t" style="left:599px;top:1046.3px;font-size:21.5px">\n</div>
<div class="tb" style="left:639px;width:129px"></div>
<div class="t" style="left:650px;top:1046.3px;font-size:22px">Actions</div>
<svg class="a" style="left:736px;top:1049px" width="20" height="13"><path d="M2 2 L10 10 L18 2" fill="none" stroke="#3a3a3a" stroke-width="3"/></svg>
<div class="tb" style="left:1137px;width:248px"></div>
<div class="a" style="left:1336.5px;top:1038px;width:1px;height:33px;background:#c4c4c4"></div>
<div class="t" style="left:1149px;top:1046.3px;font-size:21.5px">Select extension...</div>
<svg class="a" style="left:1353px;top:1049px" width="20" height="13"><path d="M2 2 L10 10 L18 2" fill="none" stroke="#3a3a3a" stroke-width="3"/></svg>
<div class="tb" style="left:1415px;width:238px"></div>
<div class="a" style="left:1415px;top:1038px;width:81px;height:33px;background:#2a64a0;border-radius:6px 0 0 6px"></div>
<div class="t" style="left:1427px;top:1046.3px;font-size:21.5px;color:#fff">Pretty</div>
<div class="t" style="left:1508px;top:1046.3px;font-size:21.5px;color:#000">Raw</div>
<div class="t" style="left:1572px;top:1046.3px;font-size:21.5px;color:#8c8c8c">Render</div>
<div class="tb" style="left:1661px;width:43px"></div>
<div class="t" style="left:1672px;top:1046.3px;font-size:21.5px">\n</div>
<div class="tb" style="left:1712px;width:129px"></div>
<div class="t" style="left:1723.5px;top:1046.3px;font-size:22px">Actions</div>
<svg class="a" style="left:1809px;top:1049px" width="20" height="13"><path d="M2 2 L10 10 L18 2" fill="none" stroke="#3a3a3a" stroke-width="3"/></svg>
<div class="a" style="left:2265px;top:1038px;width:232px;height:33px;overflow:hidden"><div class="tb" style="left:0;top:0;width:260px"></div><div class="a" style="left:200px;top:0;width:1px;height:33px;background:#c4c4c4"></div><div class="t" style="left:11px;top:8.3px;font-size:21.5px">Select extension...</div><svg class="a" style="left:216px;top:11px" width="20" height="13"><path d="M2 2 L10 10 L18 2" fill="none" stroke="#3a3a3a" stroke-width="3"/></svg></div>
<div class="a" style="left:1430px;top:1024px;width:4.5px;height:4.5px;border-radius:50%;background:#a8a8a8"></div>
<div class="a" style="left:1437px;top:1024px;width:4.5px;height:4.5px;border-radius:50%;background:#a8a8a8"></div>
<div class="a" style="left:1444px;top:1024px;width:4.5px;height:4.5px;border-radius:50%;background:#a8a8a8"></div>
<div class="a" style="left:1394px;top:1196px;width:4.5px;height:4.5px;border-radius:50%;background:#b0b0b0"></div>
<div class="a" style="left:1394px;top:1203.5px;width:4.5px;height:4.5px;border-radius:50%;background:#b0b0b0"></div>
<div class="a" style="left:1394px;top:1211px;width:4.5px;height:4.5px;border-radius:50%;background:#b0b0b0"></div>
<div class="a" style="left:1402px;top:1196px;width:4.5px;height:4.5px;border-radius:50%;background:#b0b0b0"></div>
<div class="a" style="left:1402px;top:1203.5px;width:4.5px;height:4.5px;border-radius:50%;background:#b0b0b0"></div>
<div class="a" style="left:1402px;top:1211px;width:4.5px;height:4.5px;border-radius:50%;background:#b0b0b0"></div>
<div class="a" style="left:375px;top:1080px;width:1px;height:174px;background:#d4d4d4"></div>
<div class="a" style="left:377px;top:1080px;width:1000px;height:44.5px;background:#efefef"></div>
<div class="a" style="left:1378px;top:1082px;width:14px;height:77px;background:#e8e8e8"></div>
<div class="a" style="left:1448px;top:1083px;width:1px;height:171px;background:#d4d4d4"></div>
<div class="a" style="left:1449px;top:1083px;width:1048px;height:44.5px;background:#efefef"></div>
<div class="t ser" style="left:355px;top:1085.8px"><span style="color:#808080"><i><b style="transform:scaleX(0.94)">1</b></i></span></div>
<div class="t ser" style="left:378.5px;top:1085.8px"><i><b style="transform:scaleX(0.65)">G</b></i><i><b style="transform:scaleX(0.77)">E</b></i><i><b style="transform:scaleX(0.77)">T</b></i></div>
<div class="t ser" style="left:378.5px;top:1131.4px"><i>/</i><i><b style="transform:scaleX(0.94)">p</b></i><i>a</i><i><b style="transform:scaleX(0.94)">p</b></i><i>i</i><i>/</i><i><b style="transform:scaleX(0.94)">p</b></i><i>a</i><i>s</i><i>s</i><i><b style="transform:scaleX(0.94)">p</b></i><i><b style="transform:scaleX(0.94)">o</b></i><i>r</i><i>t</i><i>/</i><i><b style="transform:scaleX(0.94)">q</b></i><i>r</i><i>l</i><i><b style="transform:scaleX(0.94)">o</b></i><i><b style="transform:scaleX(0.94)">g</b></i><i>i</i><i><b style="transform:scaleX(0.94)">n</b></i><i>/</i><i>a</i><i><b style="transform:scaleX(0.94)">p</b></i><i><b style="transform:scaleX(0.94)">p</b></i><i>l</i><i><b style="transform:scaleX(0.94)">o</b></i><i><b style="transform:scaleX(0.94)">g</b></i><i>i</i><i><b style="transform:scaleX(0.94)">n</b></i><i>?</i><i>e</i><i>t</i><i><b style="transform:scaleX(0.94)">o</b></i><i><b style="transform:scaleX(0.94)">k</b></i><i>e</i><i><b style="transform:scaleX(0.94)">n</b></i><i><b style="transform:scaleX(0.83)">=</b></i><i><b style="transform:scaleX(0.94)">8</b></i><i><b style="transform:scaleX(0.94)">b</b></i><i>e</i><i><b style="transform:scaleX(0.94)">6</b></i><i>f</i><i><b style="transform:scaleX(0.94)">8</b></i><i><b style="transform:scaleX(0.94)">b</b></i><i>e</i><i><b style="transform:scaleX(0.94)">3</b></i><i><b style="transform:scaleX(0.94)">1</b></i><i><b style="transform:scaleX(0.94)">1</b></i><i>f</i><i><b style="transform:scaleX(0.94)">4</b></i><i><b style="transform:scaleX(0.94)">8</b></i><i>c</i><i><b style="transform:scaleX(0.94)">9</b></i><i><b style="transform:scaleX(0.94)">9</b></i><i><b style="transform:scaleX(0.94)">0</b></i><i>e</i><i><b style="transform:scaleX(0.94)">9</b></i><i><b style="transform:scaleX(0.94)">5</b></i><i><b style="transform:scaleX(0.94)">5</b></i><i><b style="transform:scaleX(0.94)">b</b></i><i><b style="transform:scaleX(0.94)">4</b></i><i><b style="transform:scaleX(0.94)">8</b></i><i><b style="transform:scaleX(0.94)">9</b></i><i>c</i></div>
<div class="t ser" style="left:378.5px;top:1175.9px"><i><b style="transform:scaleX(0.94)">6</b></i><i><b style="transform:scaleX(0.94)">6</b></i><i><b style="transform:scaleX(0.94)">2</b></i><i><b style="transform:scaleX(0.94)">b</b></i><i>e</i><i><b style="transform:scaleX(0.61)">&amp;</b></i><i>s</i><i>e</i><i>r</i><i><b style="transform:scaleX(0.94)">v</b></i><i>i</i><i>c</i><i>e</i><i><b style="transform:scaleX(0.83)">=</b></i><i> </i><i><b style="transform:scaleX(0.65)">H</b></i><i><b style="transform:scaleX(0.77)">T</b></i><i><b style="transform:scaleX(0.77)">T</b></i><i><b style="transform:scaleX(0.85)">P</b></i><i>/</i><i><b style="transform:scaleX(0.94)">1</b></i><i>.</i><i><b style="transform:scaleX(0.94)">1</b></i></div>
<div class="t ser" style="left:355px;top:1220.4px"><span style="color:#808080"><i><b style="transform:scaleX(0.94)">2</b></i></span></div>
<div class="t ser" style="left:378.5px;top:1220.4px"><span style="color:#00007a"><i><b style="transform:scaleX(0.65)">H</b></i><i><b style="transform:scaleX(0.94)">o</b></i><i>s</i><i>t</i></span><i>:</i></div>
<svg class="a" style="left:470px;top:1226px" width="325" height="28"><rect x="0.0" y="0" width="13.6" height="12.2" fill="rgb(215, 215, 215)"/><rect x="13.5" y="0" width="13.6" height="12.2" fill="rgb(208, 208, 208)"/><rect x="27.0" y="0" width="13.6" height="12.2" fill="rgb(223, 223, 223)"/><rect x="40.5" y="0" width="13.6" height="12.2" fill="rgb(230, 230, 230)"/><rect x="54.0" y="0" width="13.6" height="12.2" fill="rgb(204, 204, 204)"/><rect x="67.5" y="0" width="13.6" height="12.2" fill="rgb(200, 200, 200)"/><rect x="81.0" y="0" width="13.6" height="12.2" fill="rgb(230, 230, 230)"/><rect x="94.5" y="0" width="13.6" height="12.2" fill="rgb(216, 216, 216)"/><rect x="108.0" y="0" width="13.6" height="12.2" fill="rgb(214, 214, 214)"/><rect x="121.5" y="0" width="13.6" height="12.2" fill="rgb(212, 212, 212)"/><rect x="135.0" y="0" width="13.6" height="12.2" fill="rgb(250, 250, 250)"/><rect x="148.5" y="0" width="13.6" height="12.2" fill="rgb(230, 230, 230)"/><rect x="162.0" y="0" width="13.6" height="12.2" fill="rgb(230, 230, 230)"/><rect x="175.5" y="0" width="13.6" height="12.2" fill="rgb(225, 225, 225)"/><rect x="189.0" y="0" width="13.6" height="12.2" fill="rgb(209, 209, 209)"/><rect x="202.5" y="0" width="13.6" height="12.2" fill="rgb(214, 214, 214)"/><rect x="216.0" y="0" width="13.6" height="12.2" fill="rgb(209, 209, 209)"/><rect x="229.5" y="0" width="13.6" height="12.2" fill="rgb(224, 224, 224)"/><rect x="243.0" y="0" width="13.6" height="12.2" fill="rgb(200, 200, 200)"/><rect x="256.5" y="0" width="13.6" height="12.2" fill="rgb(204, 204, 204)"/><rect x="270.0" y="0" width="13.6" height="12.2" fill="rgb(210, 210, 210)"/><rect x="283.5" y="0" width="13.6" height="12.2" fill="rgb(202, 202, 202)"/><rect x="297.0" y="0" width="13.6" height="12.2" fill="rgb(219, 219, 219)"/><rect x="310.5" y="0" width="13.6" height="12.2" fill="rgb(201, 201, 201)"/><rect x="0.0" y="12" width="13.6" height="12.2" fill="rgb(217, 217, 217)"/><rect x="13.5" y="12" width="13.6" height="12.2" fill="rgb(230, 230, 230)"/><rect x="27.0" y="12" width="13.6" height="12.2" fill="rgb(224, 224, 224)"/><rect x="40.5" y="12" width="13.6" height="12.2" fill="rgb(227, 227, 227)"/><rect x="54.0" y="12" width="13.6" height="12.2" fill="rgb(225, 225, 225)"/><rect x="67.5" y="12" width="13.6" height="12.2" fill="rgb(228, 228, 228)"/><rect x="81.0" y="12" width="13.6" height="12.2" fill="rgb(208, 208, 208)"/><rect x="94.5" y="12" width="13.6" height="12.2" fill="rgb(223, 223, 223)"/><rect x="108.0" y="12" width="13.6" height="12.2" fill="rgb(206, 206, 206)"/><rect x="121.5" y="12" width="13.6" height="12.2" fill="rgb(202, 202, 202)"/><rect x="135.0" y="12" width="13.6" height="12.2" fill="rgb(250, 250, 250)"/><rect x="148.5" y="12" width="13.6" height="12.2" fill="rgb(208, 208, 208)"/><rect x="162.0" y="12" width="13.6" height="12.2" fill="rgb(231, 231, 231)"/><rect x="175.5" y="12" width="13.6" height="12.2" fill="rgb(213, 213, 213)"/><rect x="189.0" y="12" width="13.6" height="12.2" fill="rgb(216, 216, 216)"/><rect x="202.5" y="12" width="13.6" height="12.2" fill="rgb(227, 227, 227)"/><rect x="216.0" y="12" width="13.6" height="12.2" fill="rgb(219, 219, 219)"/><rect x="229.5" y="12" width="13.6" height="12.2" fill="rgb(226, 226, 226)"/><rect x="243.0" y="12" width="13.6" height="12.2" fill="rgb(232, 232, 232)"/><rect x="256.5" y="12" width="13.6" height="12.2" fill="rgb(224, 224, 224)"/><rect x="270.0" y="12" width="13.6" height="12.2" fill="rgb(222, 222, 222)"/><rect x="283.5" y="12" width="13.6" height="12.2" fill="rgb(226, 226, 226)"/><rect x="297.0" y="12" width="13.6" height="12.2" fill="rgb(214, 214, 214)"/><rect x="310.5" y="12" width="13.6" height="12.2" fill="rgb(221, 221, 221)"/></svg>
<div class="t ser" style="left:1427px;top:1088.8px"><span style="color:#808080"><i><b style="transform:scaleX(0.94)">1</b></i></span></div>
<div class="t ser" style="left:1450.5px;top:1088.8px"><i><b style="transform:scaleX(0.65)">H</b></i><i><b style="transform:scaleX(0.77)">T</b></i><i><b style="transform:scaleX(0.77)">T</b></i><i><b style="transform:scaleX(0.85)">P</b></i><i>/</i><i><b style="transform:scaleX(0.94)">1</b></i><i>.</i><i><b style="transform:scaleX(0.94)">1</b></i><i> </i><i><b style="transform:scaleX(0.94)">2</b></i><i><b style="transform:scaleX(0.94)">0</b></i><i><b style="transform:scaleX(0.94)">0</b></i></div>
<div class="t ser" style="left:1427px;top:1133.7px"><span style="color:#808080"><i><b style="transform:scaleX(0.94)">2</b></i></span></div>
<div class="t ser" style="left:1450.5px;top:1133.7px"><span style="color:#00007a"><i><b style="transform:scaleX(0.65)">D</b></i><i>a</i><i>t</i><i>e</i></span><i>:</i><i> </i><i><b style="transform:scaleX(0.77)">T</b></i><i><b style="transform:scaleX(0.94)">h</b></i><i><b style="transform:scaleX(0.94)">u</b></i><i>,</i><i> </i><i><b style="transform:scaleX(0.94)">1</b></i><i><b style="transform:scaleX(0.94)">2</b></i><i> </i><i><b style="transform:scaleX(0.53)">M</b></i><i>a</i><i>r</i><i> </i><i><b style="transform:scaleX(0.94)">2</b></i><i><b style="transform:scaleX(0.94)">0</b></i><i><b style="transform:scaleX(0.94)">2</b></i><i><b style="transform:scaleX(0.94)">6</b></i><i> </i><i><b style="transform:scaleX(0.94)">0</b></i><i><b style="transform:scaleX(0.94)">8</b></i><i>:</i><i><b style="transform:scaleX(0.94)">1</b></i><i><b style="transform:scaleX(0.94)">5</b></i><i>:</i><i><b style="transform:scaleX(0.94)">3</b></i><i><b style="transform:scaleX(0.94)">6</b></i><i> </i><i><b style="transform:scaleX(0.65)">G</b></i><i><b style="transform:scaleX(0.53)">M</b></i><i><b style="transform:scaleX(0.77)">T</b></i></div>
<div class="t ser" style="left:1427px;top:1178.6px"><span style="color:#808080"><i><b style="transform:scaleX(0.94)">3</b></i></span></div>
<div class="t ser" style="left:1450.5px;top:1178.6px"><span style="color:#00007a"><i><b style="transform:scaleX(0.71)">C</b></i><i><b style="transform:scaleX(0.94)">o</b></i><i><b style="transform:scaleX(0.94)">n</b></i><i>t</i><i>e</i><i><b style="transform:scaleX(0.94)">n</b></i><i>t</i><i>-</i><i><b style="transform:scaleX(0.77)">T</b></i><i><b style="transform:scaleX(0.94)">y</b></i><i><b style="transform:scaleX(0.94)">p</b></i><i>e</i></span><i>:</i><i> </i><i>a</i><i><b style="transform:scaleX(0.94)">p</b></i><i><b style="transform:scaleX(0.94)">p</b></i><i>l</i><i>i</i><i>c</i><i>a</i><i>t</i><i>i</i><i><b style="transform:scaleX(0.94)">o</b></i><i><b style="transform:scaleX(0.94)">n</b></i><i>/</i><i>j</i><i>s</i><i><b style="transform:scaleX(0.94)">o</b></i><i><b style="transform:scaleX(0.94)">n</b></i><i>;</i><i>c</i><i><b style="transform:scaleX(0.94)">h</b></i><i>a</i><i>r</i><i>s</i><i>e</i><i>t</i><i><b style="transform:scaleX(0.83)">=</b></i><i><b style="transform:scaleX(0.65)">U</b></i><i><b style="transform:scaleX(0.77)">T</b></i><i><b style="transform:scaleX(0.85)">F</b></i><i>-</i><i><b style="transform:scaleX(0.94)">8</b></i></div>
<div class="t ser" style="left:1427px;top:1223.5px"><span style="color:#808080"><i><b style="transform:scaleX(0.94)">4</b></i></span></div>
<div class="t ser" style="left:1450.5px;top:1223.5px"><span style="color:#00007a"><i><b style="transform:scaleX(0.71)">C</b></i><i><b style="transform:scaleX(0.94)">o</b></i><i><b style="transform:scaleX(0.94)">n</b></i><i><b style="transform:scaleX(0.94)">n</b></i><i>e</i><i>c</i><i>t</i><i>i</i><i><b style="transform:scaleX(0.94)">o</b></i><i><b style="transform:scaleX(0.94)">n</b></i></span><i>:</i><i> </i><i>c</i><i>l</i><i><b style="transform:scaleX(0.94)">o</b></i><i>s</i><i>e</i></div>
<svg class="a" style="left:2355px;top:1190px" width="152" height="64">
<circle cx="142.1" cy="26.4" r="1.8" fill="#e8e8e8"/><circle cx="116.3" cy="57.7" r="1.8" fill="#e8e8e8"/><circle cx="90.0" cy="15.7" r="1.9" fill="#e8e8e8"/><circle cx="122.0" cy="58.9" r="1.3" fill="#e8e8e8"/><circle cx="95.0" cy="39.2" r="1.7" fill="#e8e8e8"/><circle cx="108.3" cy="8.9" r="1.2" fill="#e8e8e8"/><circle cx="155.6" cy="46.5" r="0.9" fill="#e8e8e8"/><circle cx="106.8" cy="9.7" r="0.9" fill="#e8e8e8"/><circle cx="144.2" cy="13.9" r="1.5" fill="#e8e8e8"/><circle cx="120.4" cy="14.7" r="1.7" fill="#e8e8e8"/><circle cx="98.9" cy="40.0" r="0.9" fill="#e8e8e8"/><circle cx="118.6" cy="15.9" r="1.1" fill="#e8e8e8"/><circle cx="156.0" cy="49.0" r="1.2" fill="#e8e8e8"/><circle cx="150.2" cy="15.8" r="1.3" fill="#e8e8e8"/><circle cx="148.1" cy="39.9" r="0.9" fill="#e8e8e8"/><circle cx="157.3" cy="15.9" r="1.1" fill="#e8e8e8"/><circle cx="142.5" cy="22.4" r="1.2" fill="#e8e8e8"/><circle cx="95.0" cy="9.0" r="1.5" fill="#e8e8e8"/><circle cx="106.5" cy="37.7" r="1.2" fill="#e8e8e8"/><circle cx="120.8" cy="57.7" r="1.4" fill="#e8e8e8"/><circle cx="129.1" cy="52.5" r="1.0" fill="#e8e8e8"/><circle cx="100.5" cy="54.9" r="1.8" fill="#e8e8e8"/><circle cx="107.0" cy="14.6" r="1.7" fill="#e8e8e8"/><circle cx="153.9" cy="15.0" r="1.9" fill="#e8e8e8"/><circle cx="150.0" cy="37.8" r="1.3" fill="#e8e8e8"/><path d="M151.2 32.0 L145.6 34.9 L153.2 40.2 L143.4 40.4 L147.2 46.2 L140.6 45.6 L140.6 50.2 L135.7 49.2 L135.8 56.5 L130.5 52.9 L127.5 55.2 L124.0 51.5 L120.5 55.2 L117.5 53.0 L112.0 56.9 L113.6 47.4 L103.8 54.2 L106.0 46.8 L100.0 46.7 L103.9 40.7 L99.9 38.7 L105.1 34.6 L96.3 32.0 L104.9 29.4 L99.7 25.2 L105.6 24.0 L103.6 19.6 L107.9 18.7 L106.3 12.6 L111.5 13.4 L112.5 8.1 L117.7 11.8 L120.1 6.1 L124.0 10.8 L127.9 6.4 L129.7 13.4 L136.9 5.2 L137.0 12.8 L143.6 10.5 L141.0 18.0 L146.0 18.5 L142.3 24.0 L149.0 25.0 L143.2 29.4 Z" fill="#e6e6e6"/>
<path d="M7 21 C9 11 28 8 40 9 C45 10 46 15 43 19 C35 28 27 38 23 46 C21 50 16 50 18 45 C22 36 30 26 37 17 C29 17 20 18 13 21 C10 22 7 23 7 21 Z" fill="#c0c0c0"/>
<circle cx="51.8" cy="34" r="9.2" fill="none" stroke="#bcbcbc" stroke-width="2.2"/>
<circle cx="75" cy="34" r="9.2" fill="none" stroke="#bcbcbc" stroke-width="2.2"/>
<path d="M92 21 C88 33 87 44 94 44.5 C99 45 101 41 101.5 36" fill="none" stroke="#bcbcbc" stroke-width="2.2"/>
<path d="M128.5 30 C127 25 113 23 112 30 C111.5 36 127 35 126 42 C125 46 117 45 113.5 42" fill="none" stroke="#bcbcbc" stroke-width="2.4"/>
</svg><!-- /EDITOR -->


<!-- scrollbar -->
<div class="a" style="left:2508px;top:0;width:9px;height:1254px;background:#efefef"></div>
<div class="a" style="left:2508px;top:124px;width:9px;height:732px;background:#c8c8c8"></div>

</body></html>
